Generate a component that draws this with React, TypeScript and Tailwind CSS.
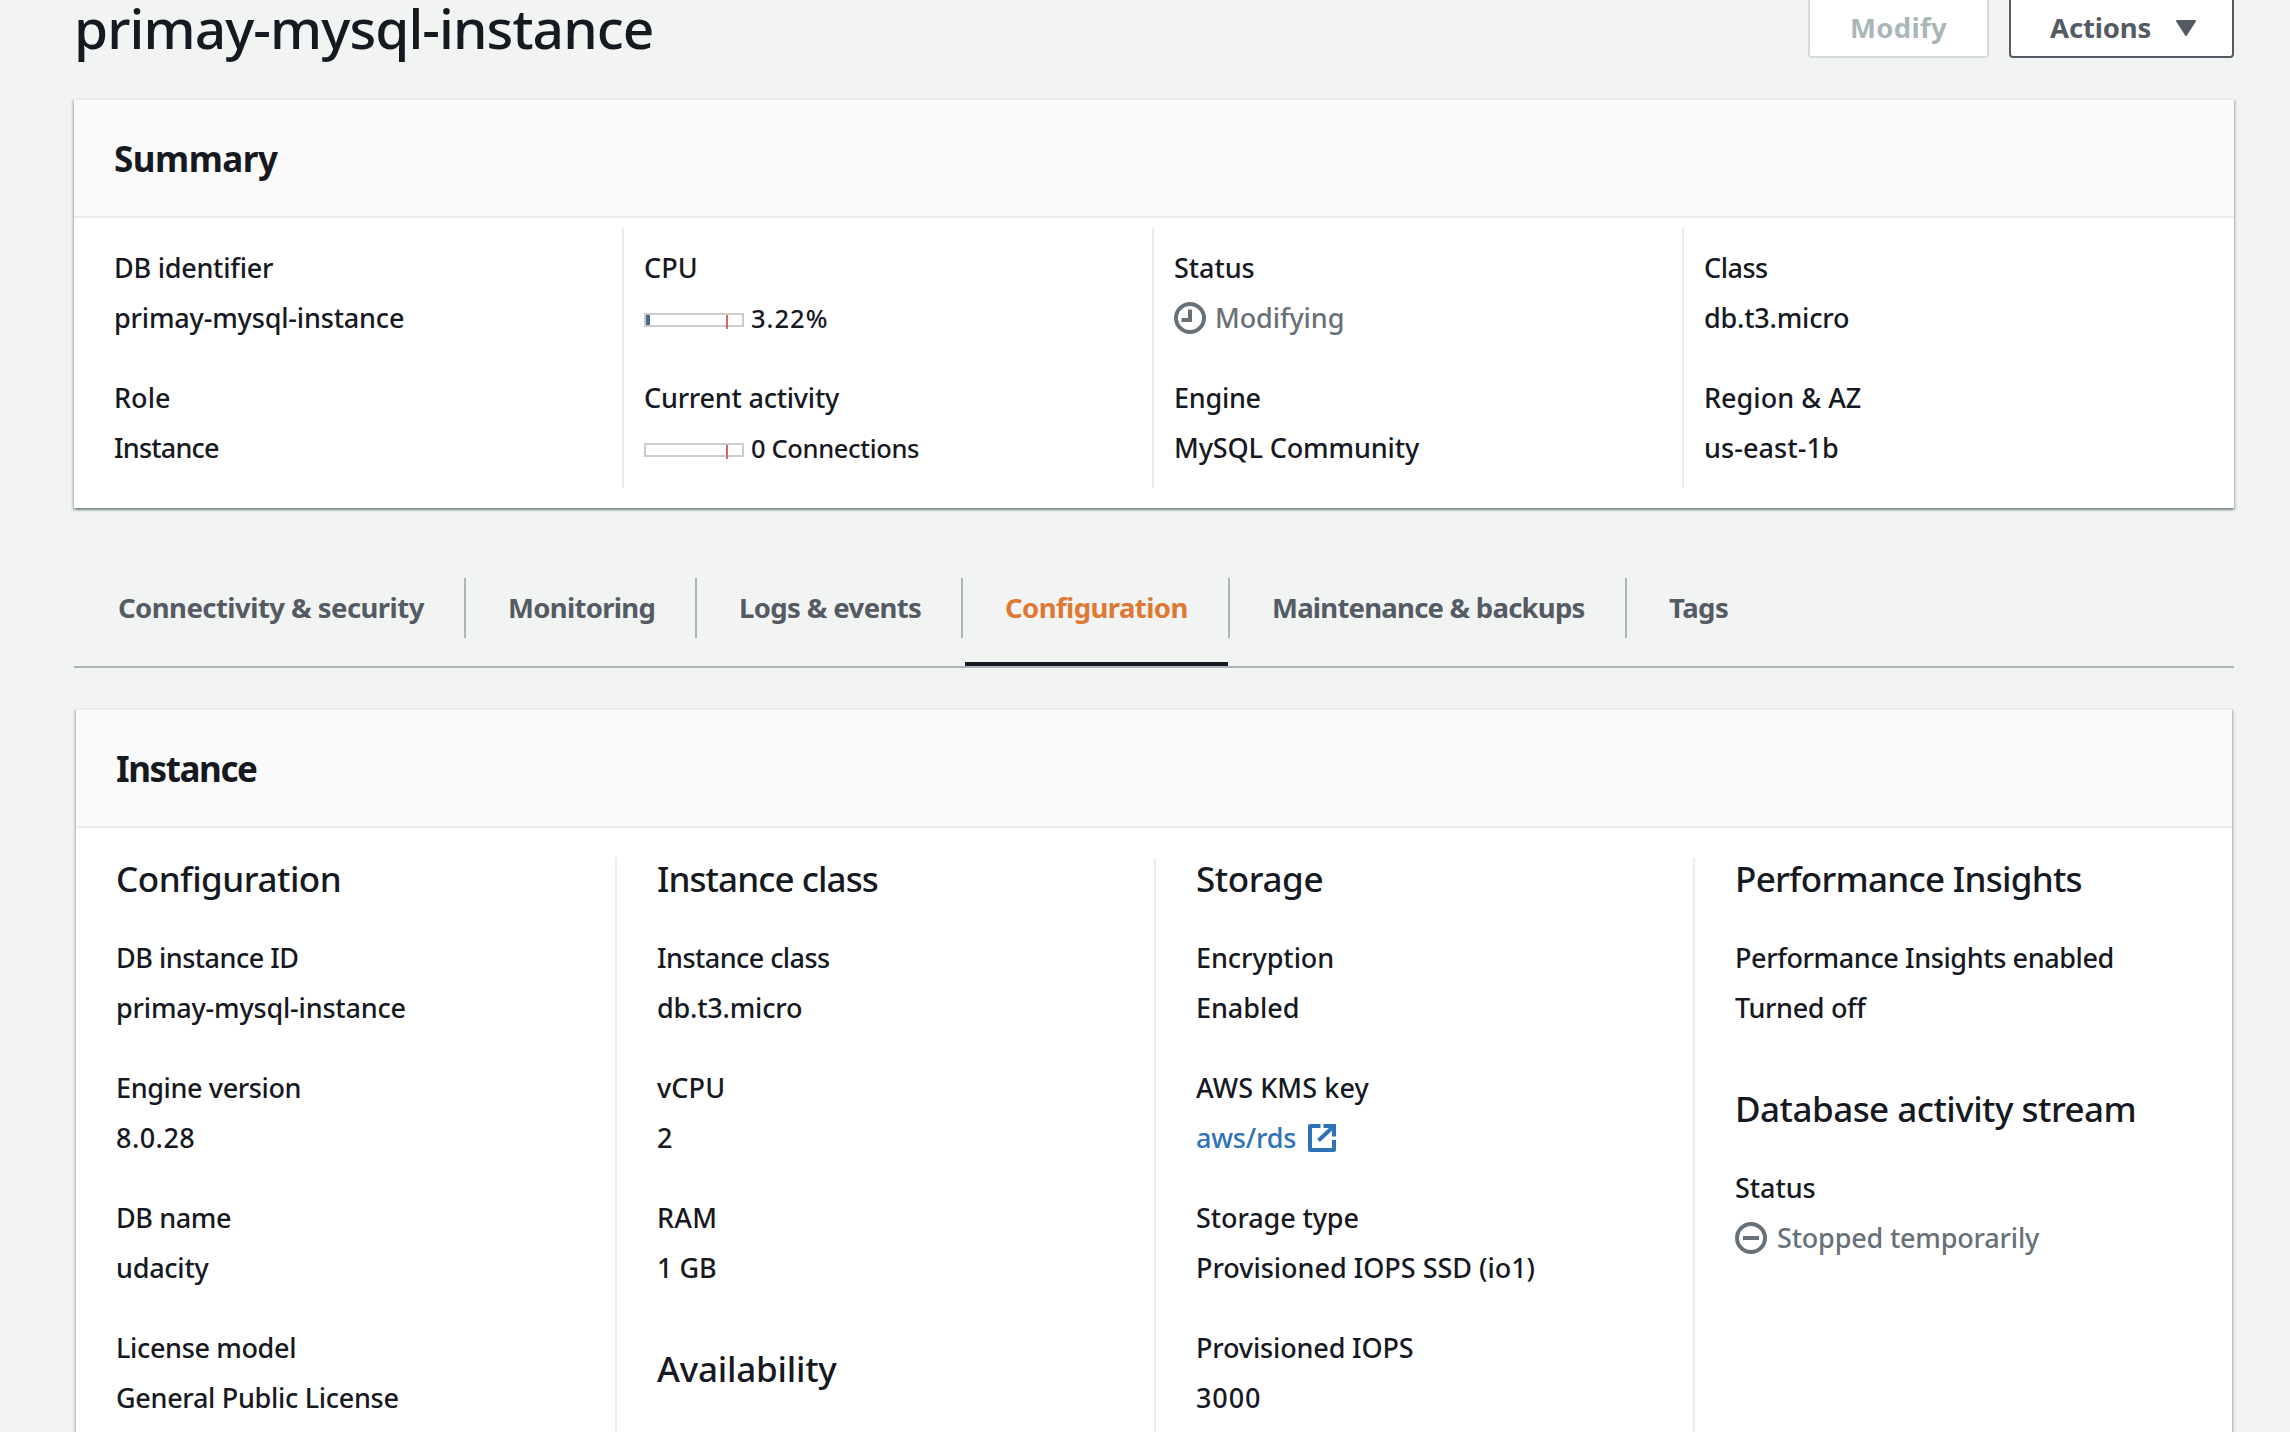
import { ReactNode } from "react";

type Item = { label: string; lt: string; value?: string; vt?: string; node?: ReactNode };

function T({ c = "", children }: { c?: string; children: ReactNode }) {
  return <span className={`whitespace-nowrap ${c}`}>{children}</span>;
}

function Field({ label, lt, value, vt = "", node }: Item) {
  return (
    <div className="h-[130px] pt-[17px]">
      <div className="h-[50px] leading-[46px]"><T c={lt}>{label}</T></div>
      <div className="flex h-[46px] items-center leading-[46px]">{node ?? <T c={vt}>{value}</T>}</div>
    </div>
  );
}

function Meter({ fill, children }: { fill: boolean; children: ReactNode }) {
  return (
    <div className="flex items-center">
      <div className="relative mt-1 h-3.5 w-[100px] border-2 border-[#cccccc]">
        {fill && <div className="h-full w-1 bg-[#4d688c]" />}
        <div className="absolute top-0 left-[80px] h-3.5 w-0.5 bg-[#cf6b66]" />
      </div>
      <div className="ml-[7px] text-[25.5px]">{children}</div>
    </div>
  );
}

function ClockIcon() {
  return (
    <svg viewBox="0 0 32 32" className="mr-[9px] size-8" fill="none" stroke="#687078" strokeWidth="4">
      <circle cx="16" cy="16" r="14" />
      <path d="M16 7.5V18H7.5" />
    </svg>
  );
}

function StopIcon() {
  return (
    <svg viewBox="0 0 32 32" className="mr-2.5 size-8" fill="none" stroke="#687078" strokeWidth="4">
      <circle cx="16" cy="16" r="14" />
      <path d="M8 16h16" />
    </svg>
  );
}

function ExternalIcon() {
  return (
    <svg viewBox="0 0 28 28" className="ml-3 size-7" fill="none" stroke="#2e73b8" strokeWidth="4" strokeLinejoin="round">
      <path d="M12.5 2H2v24h24V16" />
      <path d="M15.5 2h10.5v10.5" strokeLinejoin="miter" />
      <path d="M26 2L10.5 16.5" />
    </svg>
  );
}

function Panel({ title, tt, className = "", children }: { title: string; tt: string; className?: string; children: ReactNode }) {
  return (
    <section className={`border-t-2 border-[#eaeded] bg-white shadow-[0_2px_2px_0_rgba(0,28,36,0.3),2px_2px_2px_0_rgba(0,28,36,0.15),-2px_2px_2px_0_rgba(0,28,36,0.15)] ${className}`}>
      <header className="flex h-[118px] items-center border-b-2 border-[#eaeded] bg-[#fafafa] px-10 pt-[3px] text-[35px] font-bold">
        <T c={tt}>{title}</T>
      </header>
      {children}
    </section>
  );
}

const summary: Item[][] = [
  [
    { label: "DB identifier", lt: "tracking-[-0.25px]", value: "primay-mysql-instance", vt: "tracking-[-0.17px]" },
    { label: "Role", lt: "tracking-[0.05px]", value: "Instance", vt: "tracking-[-0.8px]" },
  ],
  [
    { label: "CPU", lt: "tracking-[0.04px]", node: <Meter fill><T c="tracking-[1px]">3.22%</T></Meter> },
    { label: "Current activity", lt: "tracking-[-0.22px]", node: <Meter fill={false}><T c="tracking-[-0.36px]">0 Connections</T></Meter> },
  ],
  [
    { label: "Status", lt: "tracking-[-0.06px]", node: <div className="flex items-center text-[#687078]"><ClockIcon /><T c="tracking-[-0.1px]">Modifying</T></div> },
    { label: "Engine", lt: "tracking-[-0.27px]", value: "MySQL Community", vt: "tracking-[-0.13px]" },
  ],
  [
    { label: "Class", lt: "tracking-[-0.5px]", value: "db.t3.micro", vt: "tracking-[-0.2px]" },
    { label: "Region & AZ", lt: "tracking-[0.02px]", value: "us-east-1b", vt: "tracking-[0.08px]" },
  ],
];

type Section = { heading: string; ht: string; items: Item[] };

const details: Section[][] = [
  [
    {
      heading: "Configuration", ht: "tracking-[-0.48px]",
      items: [
        { label: "DB instance ID", lt: "tracking-[-0.5px]", value: "primay-mysql-instance", vt: "tracking-[-0.19px]" },
        { label: "Engine version", lt: "tracking-[-0.38px]", value: "8.0.28", vt: "tracking-[0.46px]" },
        { label: "DB name", lt: "tracking-[-0.4px]", value: "udacity", vt: "tracking-[-0.25px]" },
        { label: "License model", lt: "tracking-[-0.35px]", value: "General Public License", vt: "tracking-[-0.3px]" },
      ],
    },
  ],
  [
    {
      heading: "Instance class", ht: "tracking-[-0.92px]",
      items: [
        { label: "Instance class", lt: "tracking-[-0.55px]", value: "db.t3.micro", vt: "tracking-[-0.2px]" },
        { label: "vCPU", lt: "tracking-[0.12px]", value: "2" },
        { label: "RAM", lt: "tracking-[0.2px]", value: "1 GB", vt: "tracking-[0px]" },
      ],
    },
    { heading: "Availability", ht: "tracking-[-0.22px]", items: [] },
  ],
  [
    {
      heading: "Storage", ht: "tracking-[-0.41px]",
      items: [
        { label: "Encryption", lt: "tracking-[-0.05px]", value: "Enabled", vt: "tracking-[-0.05px]" },
        { label: "AWS KMS key", lt: "tracking-[0.08px]", node: <a className="flex items-center text-[#2e73b8]"><T c="tracking-[-0.2px]">aws/rds</T><ExternalIcon /></a> },
        { label: "Storage type", lt: "tracking-[-0.1px]", value: "Provisioned IOPS SSD (io1)", vt: "tracking-[-0.02px]" },
        { label: "Provisioned IOPS", lt: "tracking-[-0.15px]", value: "3000", vt: "tracking-[0.9px]" },
      ],
    },
  ],
  [
    {
      heading: "Performance Insights", ht: "tracking-[-0.72px]",
      items: [{ label: "Performance Insights enabled", lt: "tracking-[-0.39px]", value: "Turned off", vt: "tracking-[-0.35px]" }],
    },
    {
      heading: "Database activity stream", ht: "tracking-[-0.52px]",
      items: [{ label: "Status", lt: "tracking-[-0.06px]", node: <div className="flex items-center text-[#687078]"><StopIcon /><T c="tracking-[-0.19px]">Stopped temporarily</T></div> }],
    },
  ],
];

const tabs = [
  { name: "Connectivity & security", c: "w-[390px]", t: "tracking-[-0.54px]" },
  { name: "Monitoring", c: "w-[231px]", t: "tracking-[-0.7px]" },
  { name: "Logs & events", c: "w-[266px]", t: "tracking-[-0.62px]" },
  { name: "Configuration", c: "w-[267px]", t: "tracking-[-0.58px]", active: true },
  { name: "Maintenance & backups", c: "w-[397px]", t: "tracking-[-0.77px]" },
  { name: "Tags", c: "w-[140px]", t: "tracking-[-0.51px]", last: true },
];

export default function App() {
  return (
    <div className="h-[1432px] overflow-hidden bg-[#f2f4f3] pr-14 pl-[74px] font-['Noto_Sans',sans-serif] text-[27px] font-medium text-[#16191f]">
      <div className="flex h-[98px] justify-between">
        <h1 className="-mt-2.5 text-[55px] leading-[76px]"><T c="tracking-[-0.91px]">primay-mysql-instance</T></h1>
        <div className="-mt-1 flex h-[62px] gap-5 text-[27.5px] font-bold">
          <button className="flex w-[181px] items-center justify-center rounded border-2 border-[#d5dbdb] bg-white pt-0.5 text-[#aab7b8]"><T c="tracking-[0.33px]">Modify</T></button>
          <button className="flex w-[225px] items-center rounded border-2 border-[#545b64] bg-white pt-0.5 pl-[39px] text-[#545b64]">
            <T c="tracking-[-0.15px]">Actions</T>
            <svg viewBox="0 0 20 16" className="ml-[25px] h-4 w-5" fill="#545b64" stroke="#545b64" strokeWidth="2" strokeLinejoin="round"><path d="M1 1h18l-9 14z" /></svg>
          </button>
        </div>
      </div>

      <Panel title="Summary" tt="tracking-[-0.5px]">
        <div className="grid h-[290px] grid-cols-4 px-5 pt-2.5">
          {summary.map((col, i) => (
            <div key={i} className={`h-[260px] px-5 ${i < 3 ? "border-r-2 border-[#eaeded]" : ""}`}>
              {col.map((item) => <Field key={item.label} {...item} />)}
            </div>
          ))}
        </div>
      </Panel>

      <nav className="mt-[70px] flex h-[90px] border-b-2 border-[#aab7b8] pl-0.5 text-[27.5px] font-bold text-[#545b64]">
        {tabs.map((tab) => (
          <div key={tab.name} className={`relative h-[60px] leading-[60px] ${tab.c} ${tab.last ? "" : "border-r-2 border-[#aab7b8]"}`}>
            <span className={`pl-[42px] ${tab.active ? "text-[#de7833]" : ""}`}><T c={tab.t}>{tab.name}</T></span>
            {tab.active && <div className="absolute top-[84px] right-0 left-0.5 h-1 bg-[#16191f]" />}
          </div>
        ))}
      </nav>

      <Panel title="Instance" tt="tracking-[-1.4px]" className="mx-0.5 mt-10">
        <div className="flex h-[700px] pt-[30px]">
          {details.map((col, i) => (
            <div key={i} className={`w-[539px] shrink-0 ${i ? "border-l-2 border-[#eaeded] pl-10" : "pl-10"}`}>
              {col.map((section) => (
                <div key={section.heading} className="mb-10">
                  <h3 className="h-[60px] text-[35px] leading-[42px]"><T c={section.ht}>{section.heading}</T></h3>
                  {section.items.map((item) => <Field key={item.label} {...item} />)}
                </div>
              ))}
            </div>
          ))}
        </div>
      </Panel>
    </div>
  );
}
